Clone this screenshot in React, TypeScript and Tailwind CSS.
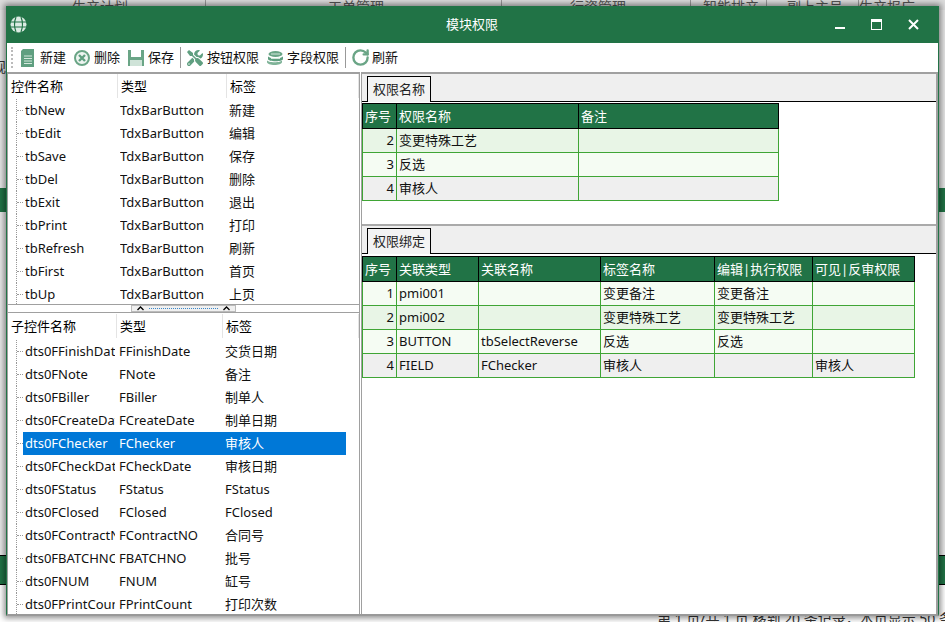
import { RotateCw } from 'lucide-react'
import { FaTools } from 'react-icons/fa'

const font = { fontFamily: '"Noto Sans", "Noto Sans CJK SC", sans-serif' }

const topRows = [
  ['tbNew', 'TdxBarButton', '新建'],
  ['tbEdit', 'TdxBarButton', '编辑'],
  ['tbSave', 'TdxBarButton', '保存'],
  ['tbDel', 'TdxBarButton', '删除'],
  ['tbExit', 'TdxBarButton', '退出'],
  ['tbPrint', 'TdxBarButton', '打印'],
  ['tbRefresh', 'TdxBarButton', '刷新'],
  ['tbFirst', 'TdxBarButton', '首页'],
  ['tbUp', 'TdxBarButton', '上页']
]

const bottomRows = [
  ['dts0FFinishDate', 'FFinishDate', '交货日期'],
  ['dts0FNote', 'FNote', '备注'],
  ['dts0FBiller', 'FBiller', '制单人'],
  ['dts0FCreateDate', 'FCreateDate', '制单日期'],
  ['dts0FChecker', 'FChecker', '审核人'],
  ['dts0FCheckDate', 'FCheckDate', '审核日期'],
  ['dts0FStatus', 'FStatus', 'FStatus'],
  ['dts0FClosed', 'FClosed', 'FClosed'],
  ['dts0FContractNO', 'FContractNO', '合同号'],
  ['dts0FBATCHNO', 'FBATCHNO', '批号'],
  ['dts0FNUM', 'FNUM', '缸号'],
  ['dts0FPrintCount', 'FPrintCount', '打印次数']
]

const DocIcon = () => (
  <svg width="13" height="18" viewBox="0 0 13 18" className="shrink-0">
    <path d="M0 2 L2 0 H13 V18 H0 Z" fill="#5f9f80" />
    <path d="M3 7 H11 M3 9.5 H11 M3 12 H11 M3 14.5 H11" stroke="#d5e8dd" strokeWidth="1" />
  </svg>
)

const DeleteIcon = () => (
  <svg width="16" height="16" viewBox="0 0 16 16" className="shrink-0">
    <circle cx="8" cy="8" r="7" fill="#eef5f1" stroke="#6aa586" strokeWidth="2" />
    <path d="M5 5 L11 11 M11 5 L5 11" stroke="#5f9f80" strokeWidth="2.4" />
  </svg>
)

const SaveIcon = () => (
  <svg width="16" height="16" viewBox="0 0 16 16" className="shrink-0">
    <path d="M0 0 H16 V16 H0 Z" fill="#6aa586" />
    <path d="M3 0 H13 V7 H3 Z" fill="#fff" />
    <path d="M2 10 H14 V16 H2 Z" fill="#cfe3d8" />
  </svg>
)

const CoinsIcon = () => (
  <svg width="17" height="14" viewBox="0 0 17 14" className="shrink-0">
    <ellipse cx="8.5" cy="3" rx="7" ry="3" fill="#6aa586" />
    <path d="M1 5 C1 8 16 8 16 5 V8 C16 11 1 11 1 8 Z" fill="#5f9f80" />
    <path d="M0 9 C0 12 15 12 15 9 V11 C15 15 0 15 0 11 Z" fill="#7fb398" />
    <path d="M4 3 H13 M4 7.5 H13" stroke="#d5e8dd" strokeWidth="1" />
  </svg>
)

const Globe = () => (
  <svg width="17" height="17" viewBox="0 0 17 17" className="shrink-0">
    <circle cx="8.5" cy="8.5" r="8" fill="#dcebe3" />
    <path d="M1 6 H16 M1 11 H16 M6 1 C4 6 4 11 6 16 M11 1 C13 6 13 11 11 16" stroke="#217346" strokeWidth="1.2" fill="none" />
  </svg>
)

const ToolButton = ({ icon, label, gap = 'gap-[6px]' }: { icon: React.ReactNode; label: string; gap?: string }) => (
  <div className={`flex items-center ${gap}`}>
    {icon}
    <span>{label}</span>
  </div>
)

const Separator = () => <div className="mx-[6px] h-[21px] w-px bg-[#999]" />

const TreeRow = ({ row, selected, cols }: { row: string[]; selected?: boolean; cols: string }) => (
  <div className="flex h-[23px] items-stretch">
    <div className="ml-[8px] flex w-[7px] items-center border-l border-dotted border-[#999]">
      <span className="w-full border-t border-dotted border-[#999]" />
    </div>
    <div className={`grid w-[323px] items-center pl-[2px] ${cols} ${selected ? 'bg-[#0078d7] text-white' : 'text-[#111]'}`}>
      <span className="mr-[4px] overflow-hidden whitespace-nowrap leading-[17px]">{row[0]}</span>
      <span className="overflow-hidden whitespace-nowrap leading-[17px]">{row[1]}</span>
      <span className="overflow-hidden whitespace-nowrap leading-[17px]">{row[2]}</span>
    </div>
  </div>
)

const TreeHeader = ({ labels, cols }: { labels: string[]; cols: string }) => (
  <div className={`grid h-[24px] items-stretch ${cols}`}>
    {labels.map((l) => (
      <div key={l} className="flex items-center border-r border-[#e4e4e4] pl-[3px]">
        {l}
      </div>
    ))}
  </div>
)

const TabStrip = ({ label }: { label: string }) => (
  <div className="flex h-[28px] shrink-0 items-end border-b border-black bg-[#efefef] pl-[5px]">
    <div className="-mb-px flex h-[26px] w-[64px] items-center justify-center border border-b-0 border-black bg-[#f3f3f3] text-[#222]">
      {label}
    </div>
  </div>
)

const rowBg: Record<string, string> = {
  a: 'bg-[#e8f5e6]',
  b: 'bg-[#f5fcf3]',
  c: 'bg-[#efefef]'
}

const DataTable = ({
  widths,
  heads,
  rows
}: {
  widths: number[]
  heads: string[]
  rows: { tone: string; cells: string[] }[]
}) => (
  <table className="mt-px table-fixed border-collapse" style={{ width: widths.reduce((a, b) => a + b, 0) }}>
    <colgroup>
      {widths.map((w, i) => (
        <col key={i} style={{ width: w }} />
      ))}
    </colgroup>
    <thead>
      <tr className="h-[25px] bg-[#217346] text-white">
        {heads.map((h) => (
          <th key={h} className="overflow-hidden whitespace-nowrap border border-black px-[2px] text-left font-normal">
            {h}
          </th>
        ))}
      </tr>
    </thead>
    <tbody>
      {rows.map((r) => (
        <tr key={r.cells[0]} className={`h-[24px] ${rowBg[r.tone]}`}>
          {r.cells.map((c, i) => (
            <td
              key={i}
              className={`overflow-hidden whitespace-nowrap border border-[#3fa535] px-[2px] text-[#111] ${i === 0 ? 'text-right' : ''}`}>
              {c}
            </td>
          ))}
        </tr>
      ))}
    </tbody>
  </table>
)

export default function App() {
  return (
    <div className="relative h-[622px] w-[945px] overflow-hidden bg-[#f0f0f0] text-[13px] leading-none" style={font}>
      {/* main window behind */}
      <div className="flex h-full flex-col">
        <div className="grid h-[10px] shrink-0 grid-cols-[205px_296px_189px_76px_92px_87px] items-center bg-[#ddd] text-[14px] text-[#555]">
          <div className="h-full pl-[72px]">生产计划</div>
          <div className="h-full border-l border-[#999] pl-[122px]">工单管理</div>
          <div className="h-full border-l border-[#999] pl-[68px]">行资管理</div>
          <div className="h-full border-l border-[#999] pl-[12px]">智能排产</div>
          <div className="h-full border-l border-[#999] pl-[20px]">副上主号</div>
          <div className="h-full border-l border-[#999]">生产报广</div>
        </div>
        <div className="h-[178px] shrink-0 bg-[#e6e6e6] pt-[50px] text-[14px] text-[#333]">
          <div className="-ml-[8px]">规则</div>
        </div>
        <div className="h-[24px] shrink-0 bg-[#217346]" />
        <div className="h-[343px] shrink-0 bg-[#e8e8e8]" />
        <div className="h-[30px] shrink-0 border-y border-black bg-[#217346]" />
        <div className="flex flex-1 items-end justify-end whitespace-nowrap bg-white text-[14px] text-[#333]">
          <span className="-mb-[4px] -mr-[8px]">第 1 页/共 1 页 移到 20 条记录，本页显示 50 条</span>
        </div>
      </div>

      {/* dialog */}
      <div className="absolute left-[6px] top-[6px] flex h-[610px] w-[933px] flex-col border-x border-b-2 border-x-[#217346] border-b-[#999] bg-white shadow-[0_0_6px_2px_rgba(0,0,0,0.45)]">
        <div className="flex h-[37px] shrink-0 items-center bg-[#217346] pl-[3px] text-white">
          <Globe />
          <div className="flex-1 pl-[82px] text-center">模块权限</div>
          <div className="flex items-center gap-[26px] pr-[19px]">
            <div className="mt-[6px] h-[2px] w-[10px] bg-white" />
            <div className="h-[11px] w-[11px] border border-t-[3px] border-white" />
            <svg width="11" height="11" viewBox="0 0 11 11">
              <path d="M1 1 L10 10 M10 1 L1 10" stroke="#fff" strokeWidth="2" />
            </svg>
          </div>
        </div>

        <div className="flex h-[29px] shrink-0 items-center pl-[4px] text-[#111]">
          <div className="mr-[8px] h-[21px] border-l-2 border-dotted border-[#bbb]" />
          <ToolButton icon={<DocIcon />} label="新建" />
          <div className="w-[8px]" />
          <ToolButton icon={<DeleteIcon />} label="删除" gap="gap-[4px]" />
          <div className="w-[8px]" />
          <ToolButton icon={<SaveIcon />} label="保存" gap="gap-[4px]" />
          <Separator />
          <ToolButton icon={<FaTools size={16} color="#5f9f80" />} label="按钮权限" gap="gap-[4px]" />
          <div className="w-[8px]" />
          <ToolButton icon={<CoinsIcon />} label="字段权限" gap="gap-[3px]" />
          <Separator />
          <ToolButton
            icon={<RotateCw size={19} strokeWidth={3} color="#6aa586" className="-mx-[1px]" />}
            label="刷新"
            gap="gap-[3px]"
          />
        </div>

        <div className="flex min-h-0 flex-1">
          <div className="flex w-[353px] shrink-0 flex-col border-x border-[#a0a0a0]">
            <div className="h-[232px] shrink-0 overflow-hidden border-t-2 border-[#a0a0a0]">
              <TreeHeader labels={['控件名称', '类型', '标签']} cols="grid-cols-[110px_109px_1fr]" />
              <div className="h-[1px]" />
              {topRows.map((r) => (
                <TreeRow key={r[0]} row={r} cols="grid-cols-[95px_109px_1fr]" />
              ))}
            </div>
            <div className="flex h-[9px] shrink-0 items-center justify-center border-y border-[#a0a0a0] bg-white">
              <div className="flex h-[7px] w-[105px] items-center gap-[5px] border border-[#bbb] bg-[#f0f0f0] px-[5px]">
                <svg width="7" height="5" viewBox="0 0 7 5" className="shrink-0">
                  <path d="M0.5 4 L3.5 1 L6.5 4" stroke="#000" strokeWidth="1.3" fill="none" />
                </svg>
                <div className="flex-1 border-t border-dotted border-[#3a86c8]" />
                <svg width="7" height="5" viewBox="0 0 7 5" className="shrink-0">
                  <path d="M0.5 4 L3.5 1 L6.5 4" stroke="#000" strokeWidth="1.3" fill="none" />
                </svg>
              </div>
            </div>
            <div className="min-h-0 flex-1 overflow-hidden pt-px">
              <TreeHeader labels={['子控件名称', '类型', '标签']} cols="grid-cols-[109px_106px_1fr]" />
              <div className="h-[2px]" />
              {bottomRows.map((r) => (
                <TreeRow key={r[0]} row={r} selected={r[0] === 'dts0FChecker'} cols="grid-cols-[94px_106px_1fr]" />
              ))}
            </div>
          </div>

          <div className="ml-px flex min-w-0 flex-1 flex-col border-r-2 border-l border-t-2 border-[#a0a0a0]">
            <div className="h-[150px] shrink-0">
              <TabStrip label="权限名称" />
              <DataTable
                widths={[34, 182, 200]}
                heads={['序号', '权限名称', '备注']}
                rows={[
                  { tone: 'a', cells: ['2', '变更特殊工艺', ''] },
                  { tone: 'b', cells: ['3', '反选', ''] },
                  { tone: 'c', cells: ['4', '审核人', ''] }
                ]}
              />
            </div>
            <div className="h-[2px] shrink-0 bg-[#aaa]" />
            <TabStrip label="权限绑定" />
            <div className="h-px shrink-0" />
            <DataTable
              widths={[34, 82, 122, 114, 98, 102]}
              heads={['序号', '关联类型', '关联名称', '标签名称', '编辑|执行权限', '可见|反审权限']}
              rows={[
                { tone: 'b', cells: ['1', 'pmi001', '', '变更备注', '变更备注', ''] },
                { tone: 'a', cells: ['2', 'pmi002', '', '变更特殊工艺', '变更特殊工艺', ''] },
                { tone: 'b', cells: ['3', 'BUTTON', 'tbSelectReverse', '反选', '反选', ''] },
                { tone: 'c', cells: ['4', 'FIELD', 'FChecker', '审核人', '', '审核人'] }
              ]}
            />
          </div>
        </div>
      </div>
    </div>
  )
}
